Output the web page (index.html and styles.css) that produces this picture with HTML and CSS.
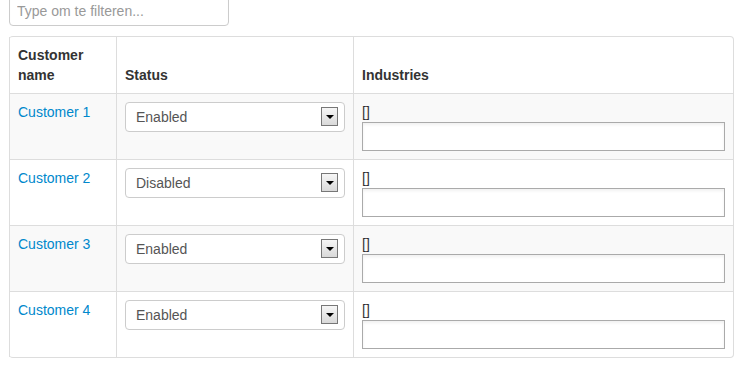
FILE: index.html
```html
<!DOCTYPE html>
<html lang="en">
<head>
    <meta charset="UTF-8">
    <title>Customers</title>
    <link rel="stylesheet" href="styles.css">
</head>
<body>
    <div class="page">
        <!-- Filter -->
        <input type="text" class="filter" placeholder="Type om te filteren...">

        <!-- Customers table -->
        <table class="table">
            <thead>
                <tr>
                    <th class="col-name">Customer name</th>
                    <th class="col-status">Status</th>
                    <th class="col-industries">Industries</th>
                </tr>
            </thead>
            <tbody>
                <tr class="striped">
                    <td><a href="#">Customer 1</a></td>
                    <td>
                        <div class="select-wrap">
                            <select class="select"><option>Enabled</option><option>Disabled</option></select>
                            <span class="select-btn"></span>
                        </div>
                    </td>
                    <td><div class="tags">[]</div><input type="text" class="tag-input"></td>
                </tr>
                <tr>
                    <td><a href="#">Customer 2</a></td>
                    <td>
                        <div class="select-wrap">
                            <select class="select"><option>Enabled</option><option selected>Disabled</option></select>
                            <span class="select-btn"></span>
                        </div>
                    </td>
                    <td><div class="tags">[]</div><input type="text" class="tag-input"></td>
                </tr>
                <tr class="striped">
                    <td><a href="#">Customer 3</a></td>
                    <td>
                        <div class="select-wrap">
                            <select class="select"><option>Enabled</option><option>Disabled</option></select>
                            <span class="select-btn"></span>
                        </div>
                    </td>
                    <td><div class="tags">[]</div><input type="text" class="tag-input"></td>
                </tr>
                <tr>
                    <td><a href="#">Customer 4</a></td>
                    <td>
                        <div class="select-wrap">
                            <select class="select"><option>Enabled</option><option>Disabled</option></select>
                            <span class="select-btn"></span>
                        </div>
                    </td>
                    <td><div class="tags">[]</div><input type="text" class="tag-input"></td>
                </tr>
            </tbody>
        </table>
    </div>
</body>
</html>
```

FILE: styles.css
```css
* {
    margin: 0;
    padding: 0;
    box-sizing: border-box;
}

body {
    font-family: "Liberation Sans", Arial, sans-serif;
    font-size: 14px;
    line-height: 20px;
    color: #333;
    background: #fff;
}

.page {
    padding: 0 9px;
    margin-top: -5px;
}

.filter {
    display: block;
    width: 220px;
    height: 31px;
    padding: 4px 7px;
    border: 1px solid #ccc;
    border-radius: 4px;
    box-shadow: inset 0 1px 1px rgba(0, 0, 0, 0.075);
    font-family: inherit;
    font-size: 14px;
    color: #555;
    margin-bottom: 10px;
}

.filter::placeholder {
    color: #999;
}

.table {
    width: 724px;
    table-layout: fixed;
    border-collapse: separate;
    border-spacing: 0;
    border: 1px solid #ddd;
    border-left: 0;
    border-radius: 4px;
}

.table th,
.table td {
    padding: 8px;
    text-align: left;
    border-left: 1px solid #ddd;
    border-top: 1px solid #ddd;
    vertical-align: top;
}

.table th {
    font-weight: bold;
    vertical-align: bottom;
    border-top: 0;
}

.col-name { width: 107px; }
.col-status { width: 237px; }
.col-industries { width: 380px; }

.striped td {
    background: #f9f9f9;
}

.table a {
    color: #0088cc;
    text-decoration: none;
}

.select-wrap {
    position: relative;
    width: 220px;
}

.select {
    display: block;
    width: 220px;
    height: 30px;
    padding: 4px 10px;
    border: 1px solid #ccc;
    border-radius: 4px;
    background: #fff;
    font-family: inherit;
    font-size: 14px;
    color: #555;
    appearance: none;
    -webkit-appearance: none;
}

.select-btn {
    position: absolute;
    top: 5px;
    right: 7px;
    width: 17px;
    height: 19px;
    border: 1px solid #777;
    background: linear-gradient(#f6f6f6, #d9d9d9);
    pointer-events: none;
}

.select-btn::after {
    content: "";
    position: absolute;
    left: 4px;
    top: 7px;
    border-left: 4px solid transparent;
    border-right: 4px solid transparent;
    border-top: 4px solid #000;
}

.tags {
    height: 20px;
    color: #333;
}

.tag-input {
    display: block;
    width: 100%;
    height: 29px;
    border: 1px solid #aaa;
    box-shadow: inset 0 2px 3px rgba(0, 0, 0, 0.06);
    background: #fff;
    font-family: inherit;
    font-size: 14px;
}
```
